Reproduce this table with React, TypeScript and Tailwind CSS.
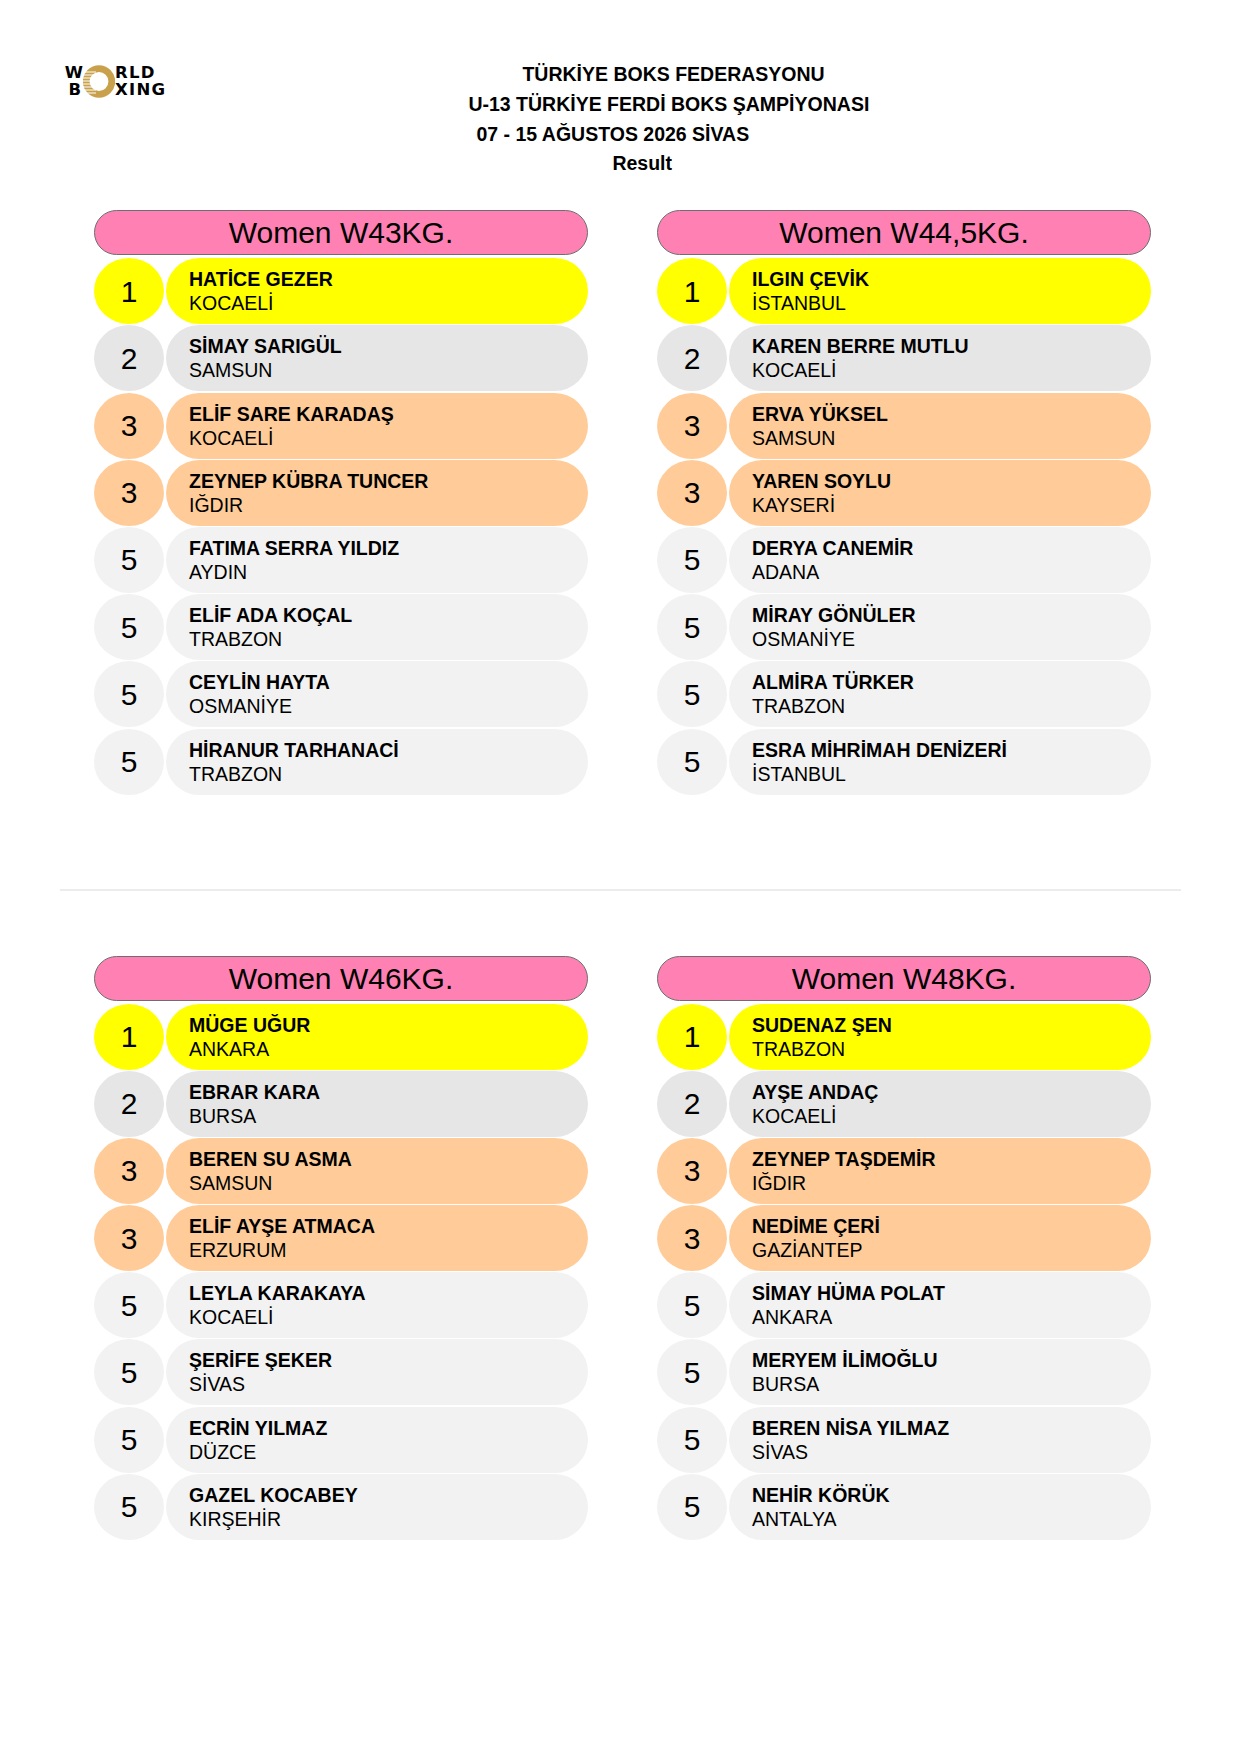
import React from "react";

type Entry = { rank: number; name: string; club: string };
type Category = { title: string; entries: Entry[] };

const rankBg: Record<number, string> = {
  1: "bg-[#ffff00]",
  2: "bg-[#e6e6e6]",
  3: "bg-[#ffcc99]",
  5: "bg-[#f2f2f2]",
};

const top: Category[] = [
  {
    title: "Women W43KG.",
    entries: [
      { rank: 1, name: "HATİCE GEZER", club: "KOCAELİ" },
      { rank: 2, name: "SİMAY SARIGÜL", club: "SAMSUN" },
      { rank: 3, name: "ELİF SARE KARADAŞ", club: "KOCAELİ" },
      { rank: 3, name: "ZEYNEP KÜBRA TUNCER", club: "IĞDIR" },
      { rank: 5, name: "FATIMA SERRA YILDIZ", club: "AYDIN" },
      { rank: 5, name: "ELİF ADA KOÇAL", club: "TRABZON" },
      { rank: 5, name: "CEYLİN HAYTA", club: "OSMANİYE" },
      { rank: 5, name: "HİRANUR TARHANACİ", club: "TRABZON" },
    ],
  },
  {
    title: "Women W44,5KG.",
    entries: [
      { rank: 1, name: "ILGIN ÇEVİK", club: "İSTANBUL" },
      { rank: 2, name: "KAREN BERRE MUTLU", club: "KOCAELİ" },
      { rank: 3, name: "ERVA YÜKSEL", club: "SAMSUN" },
      { rank: 3, name: "YAREN SOYLU", club: "KAYSERİ" },
      { rank: 5, name: "DERYA CANEMİR", club: "ADANA" },
      { rank: 5, name: "MİRAY GÖNÜLER", club: "OSMANİYE" },
      { rank: 5, name: "ALMİRA TÜRKER", club: "TRABZON" },
      { rank: 5, name: "ESRA MİHRİMAH DENİZERİ", club: "İSTANBUL" },
    ],
  },
];

const bottom: Category[] = [
  {
    title: "Women W46KG.",
    entries: [
      { rank: 1, name: "MÜGE UĞUR", club: "ANKARA" },
      { rank: 2, name: "EBRAR KARA", club: "BURSA" },
      { rank: 3, name: "BEREN SU ASMA", club: "SAMSUN" },
      { rank: 3, name: "ELİF AYŞE ATMACA", club: "ERZURUM" },
      { rank: 5, name: "LEYLA KARAKAYA", club: "KOCAELİ" },
      { rank: 5, name: "ŞERİFE ŞEKER", club: "SİVAS" },
      { rank: 5, name: "ECRİN YILMAZ", club: "DÜZCE" },
      { rank: 5, name: "GAZEL KOCABEY", club: "KIRŞEHİR" },
    ],
  },
  {
    title: "Women W48KG.",
    entries: [
      { rank: 1, name: "SUDENAZ ŞEN", club: "TRABZON" },
      { rank: 2, name: "AYŞE ANDAÇ", club: "KOCAELİ" },
      { rank: 3, name: "ZEYNEP TAŞDEMİR", club: "IĞDIR" },
      { rank: 3, name: "NEDİME ÇERİ", club: "GAZİANTEP" },
      { rank: 5, name: "SİMAY HÜMA POLAT", club: "ANKARA" },
      { rank: 5, name: "MERYEM İLİMOĞLU", club: "BURSA" },
      { rank: 5, name: "BEREN NİSA YILMAZ", club: "SİVAS" },
      { rank: 5, name: "NEHİR KÖRÜK", club: "ANTALYA" },
    ],
  },
];

const Logo = () => (
  <div className="flex items-center font-['DejaVu_Sans',sans-serif] text-[16.5px] font-bold leading-[17px] text-black">
    <div className="flex w-[17px] flex-col items-end">
      <span>W</span>
      <span className="pr-[2px]">B</span>
    </div>
    <svg width="32" height="33" viewBox="0 0 32 33">
      <circle cx="16" cy="16.5" r="12.8" fill="none" stroke="#c9a14c" strokeWidth="6.8" />
      {[7, 10, 13, 16, 19, 22, 25, 28].map((y) => (
        <line key={y} x1="0" y1={y} x2="13" y2={y} stroke="#ffffff" strokeWidth="1" />
      ))}
    </svg>
    <div className="flex flex-col tracking-[1.3px]">
      <span>RLD</span>
      <span>XING</span>
    </div>
  </div>
);

const Row = ({ entry }: { entry: Entry }) => {
  const bg = rankBg[entry.rank];
  return (
    <div className="flex h-[66px] gap-[2px]">
      <div className={`flex w-[70px] shrink-0 items-center justify-center rounded-[50%] text-[30px] ${bg}`}>
        {entry.rank}
      </div>
      <div className={`flex flex-1 flex-col justify-center rounded-full pl-[23px] text-[19.5px] leading-[24px] ${bg}`}>
        <span className="font-bold">{entry.name}</span>
        <span>{entry.club}</span>
      </div>
    </div>
  );
};

const Column = ({ cat }: { cat: Category }) => (
  <div className="w-[494px]">
    <div className="flex h-[45px] items-center justify-center rounded-full border-[1.5px] border-[#6e6e6e] bg-[#ff80b3] text-[30px]">
      {cat.title}
    </div>
    <div className="mt-[3px] flex flex-col gap-[1.2px]">
      {cat.entries.map((e, i) => (
        <Row key={i} entry={e} />
      ))}
    </div>
  </div>
);

const Section = ({ cats }: { cats: Category[] }) => (
  <div className="ml-[94px] flex gap-[69px]">
    {cats.map((c) => (
      <Column key={c.title} cat={c} />
    ))}
  </div>
);

export default function App() {
  return (
    <div className="h-[1755px] w-[1241px] bg-white font-['Liberation_Sans',Arial,sans-serif] text-black">
      <header className="flex pt-[64px]">
        <div className="ml-[66px]">
          <Logo />
        </div>
        <div className="ml-[302px] -mt-[4px] flex flex-col text-[19.5px] font-bold leading-[29.8px]">
          <span className="pl-[54px]">TÜRKİYE BOKS FEDERASYONU</span>
          <span>U-13 TÜRKİYE FERDİ BOKS ŞAMPİYONASI</span>
          <span className="pl-[8px]">07 - 15 AĞUSTOS 2026 SİVAS</span>
          <span className="pl-[144px]">Result</span>
        </div>
      </header>

      <div className="mt-[31px]">
        <Section cats={top} />
      </div>

      <div className="mx-[60px] mt-[94px] h-[2px] bg-[#ececec]" />

      <div className="mt-[65px]">
        <Section cats={bottom} />
      </div>
    </div>
  );
}
